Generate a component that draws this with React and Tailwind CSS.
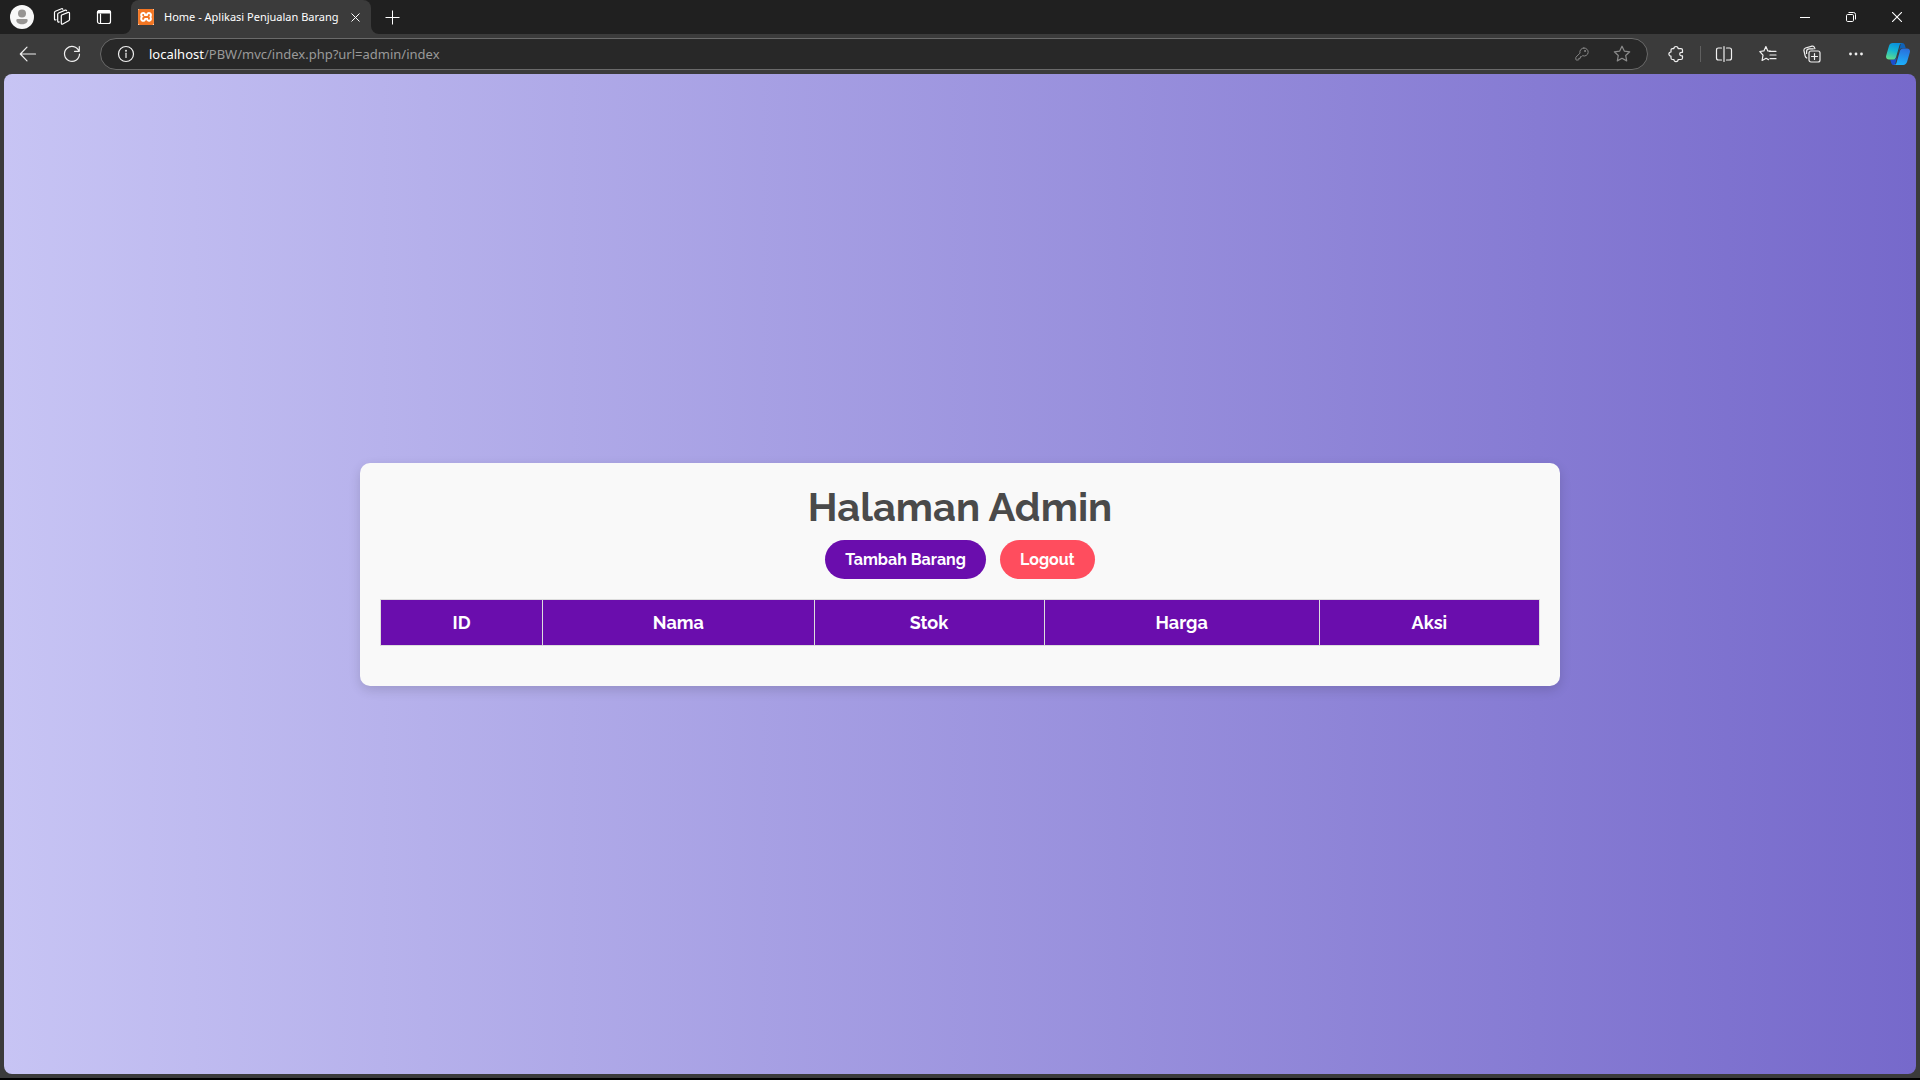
import { SiXampp } from "react-icons/si";

function Icon({ size = 20, children, className = "" }) {
  return (
    <svg
      width={size}
      height={size}
      viewBox="0 0 20 20"
      fill="none"
      stroke="currentColor"
      strokeWidth="1.2"
      strokeLinecap="round"
      strokeLinejoin="round"
      className={className}
      aria-hidden="true"
    >
      {children}
    </svg>
  );
}

function ToolButton({ label, children, className = "w-11" }) {
  return (
    <button type="button" aria-label={label} className={`flex h-8 shrink-0 items-center justify-center ${className}`}>
      {children}
    </button>
  );
}

function Flare({ flip = false }) {
  return (
    <svg width="8" height="8" viewBox="0 0 8 8" className={flip ? "-scale-x-100" : ""} aria-hidden="true">
      <path d="M8 0v8H0a8 8 0 0 0 8-8z" fill="#3b3b3b" />
    </svg>
  );
}

function CopilotLogo() {
  return (
    <svg width="24" height="24" viewBox="0 0 24 24" aria-hidden="true">
      <defs>
        <linearGradient id="copilotLeft" x1="0.6" y1="0" x2="0.3" y2="1">
          <stop offset="0" stopColor="#0a8fdc" />
          <stop offset="0.45" stopColor="#14b4d4" />
          <stop offset="1" stopColor="#5fdc8c" />
        </linearGradient>
        <linearGradient id="copilotRight" x1="0.6" y1="0" x2="0.4" y2="1">
          <stop offset="0" stopColor="#2a6fdc" />
          <stop offset="1" stopColor="#1cb2fb" />
        </linearGradient>
      </defs>
      <path d="M15 1h1.200c1.300 0 2.200.9 2.600 2.100l1 3.100h-3.600c-1.400 0-2.500.8-2.900 2.200l-1 3.200z" fill="#0f62b8" />
      <path d="M9 23H7.800c-1.300 0-2.200-.9-2.600-2.100l-1-3.400h3.600c1.400 0 2.500-.8 2.900-2.200l1-3.200z" fill="#1a4fd0" />
      <path d="M6.800 1h9.400c-1.400 0-2.300 1-2.700 2.300l-3.400 11.600c-.5 1.600-1.500 2.600-3.100 2.600H3c-2.300 0-3.500-1.700-2.800-4L2.900 4.200C3.500 2.200 4.800 1 6.800 1z" fill="url(#copilotLeft)" />
      <path d="M17.200 23H7.800c1.400 0 2.300-1 2.700-2.300l3.400-11.600c.5-1.700 1.500-2.700 3.100-2.700h4c2.300 0 3.500 1.800 2.800 4.100l-2.700 9.300c-.6 2-1.900 3.200-3.900 3.200z" fill="url(#copilotRight)" />
    </svg>
  );
}

function TabStrip() {
  return (
    <header className="flex h-[34px] items-center bg-[#202020] text-white">
      <button type="button" aria-label="Profile" className="ml-[10px] h-6 w-6 overflow-hidden rounded-full bg-[#f8f8f8]">
        <svg width="24" height="24" viewBox="0 0 24 24" fill="#979593" aria-hidden="true">
          <circle cx="12" cy="8.500" r="4" />
          <path d="M7.500 14h9a1.200 1.200 0 0 1 1.200 1.200c0 2.400-2.400 4-5.700 4s-5.700-1.600-5.700-4A1.200 1.200 0 0 1 7.500 14z" />
        </svg>
      </button>
      <button type="button" aria-label="Workspaces" className="ml-[18px] flex h-8 w-5 items-center justify-center">
        <Icon>
          <path d="M9.700 8l6.500-2.600q1.300-.4 1.300.9v6.200q0 .9-.9 1.300l-5.800 3.200q-1.500.7-1.500-.9V8.900q0-.7.4-.9z" />
          <path d="M7.200 14.900q-1.500.6-1.500-.9V7.300q0-.9.9-1.300l6.700-2.900q.9-.3 1.300.6" />
          <path d="M4 12.800q-1.500.6-1.500-.9V5.600q0-.9.9-1.300l6.100-2.500q.9-.3 1.300.5" />
        </Icon>
      </button>
      <button type="button" aria-label="Tab actions" className="ml-[22px] flex h-8 w-5 items-center justify-center">
        <Icon>
          <rect x="3.500" y="3.500" width="13" height="13" rx="2" />
          <path d="M3.500 5.500a2 2 0 0 1 2-2h9a2 2 0 0 1 2 2V6h-13z" fill="currentColor" />
          <path d="M6.500 7v9" />
        </Icon>
      </button>

      <div className="ml-[9px] flex items-end self-stretch">
        <Flare />
        <div className="flex h-full w-60 items-center rounded-t-lg bg-[#3b3b3b] pl-[7px] pr-2">
          <span className="flex h-4 w-4 items-center justify-center bg-white">
            <SiXampp size={16} color="#f37623" aria-hidden="true" />
          </span>
          <span className="ml-[10px] flex-1 whitespace-nowrap font-['Noto_Sans',sans-serif] text-[11px] leading-4">
            Home - Aplikasi Penjualan Barang
          </span>
          <button type="button" aria-label="Close tab" className="flex h-4 w-4 items-center justify-center">
            <svg width="9" height="9" viewBox="0 0 9 9" stroke="currentColor" aria-hidden="true">
              <path d="M.5.5l8 8M8.500.5l-8 8" />
            </svg>
          </button>
        </div>
        <Flare flip />
      </div>

      <button type="button" aria-label="New tab" className="ml-[3px] flex h-8 w-5 items-center justify-center">
        <svg width="15" height="15" viewBox="0 0 15 15" stroke="currentColor" aria-hidden="true">
          <path d="M7.500.5v14M.5 7.500h14" />
        </svg>
      </button>

      <div className="ml-auto flex">
        <ToolButton label="Minimize" className="w-[46px]">
          <svg width="10" height="10" viewBox="0 0 10 10" stroke="currentColor" aria-hidden="true">
            <path d="M0 5.500h10" />
          </svg>
        </ToolButton>
        <ToolButton label="Restore" className="w-[46px]">
          <svg width="10" height="10" viewBox="0 0 10 10" fill="none" stroke="currentColor" aria-hidden="true">
            <rect x=".5" y="2.500" width="7" height="7" rx="1.200" />
            <path d="M2.500.5h5a2 2 0 0 1 2 2v5" />
          </svg>
        </ToolButton>
        <ToolButton label="Close" className="w-[46px]">
          <svg width="10" height="10" viewBox="0 0 10 10" stroke="currentColor" strokeWidth="1.100" aria-hidden="true">
            <path d="M0 0l10 10M10 0L0 10" />
          </svg>
        </ToolButton>
      </div>
    </header>
  );
}

function Toolbar() {
  return (
    <nav className="flex h-10 items-center bg-[#3b3b3b] pl-[6px] pr-0.5 text-[#f0f0f0]">
      <ToolButton label="Back">
        <Icon>
          <path d="M17.500 10H2.500M9 3.200L2.300 10 9 16.800" />
        </Icon>
      </ToolButton>
      <ToolButton label="Refresh">
        <Icon>
          <path d="M17 7.200A7.500 7.500 0 1 0 17.500 10M17.300 2.500v4.800h-4.800" />
        </Icon>
      </ToolButton>

      <div className="mx-[6px] flex h-8 flex-1 items-center rounded-full border border-[#6a6a6a] bg-[#282828] px-[15px]">
        <Icon className="shrink-0">
          <circle cx="10" cy="10" r="7.500" />
          <path d="M10 9.200v4.300" />
          <circle cx="10" cy="6.800" r=".4" fill="currentColor" />
        </Icon>
        <a
          href="#"
          className="ml-[13px] flex-1 whitespace-nowrap font-['Noto_Sans',sans-serif] text-[13px] leading-5 text-[#9a9a9a]"
        >
          <span className="text-white">localhost</span>/PBW/mvc/index.php?url=admin/index
        </a>
        <button type="button" aria-label="Saved passwords" className="flex w-5 justify-center text-[#8b8b8b]">
          <Icon size={16}>
            <path d="M12.300 2.500a5 5 0 0 0-4.800 6.400L2.600 13.800q-.3.300-.3.700v2.300q0 .7.700.7h2.400q.6 0 .6-.6v-1.500h1.500q.6 0 .6-.6v-1.500h1.300l1.400-1.200A5 5 0 1 0 12.300 2.500z" />
            <circle cx="13.700" cy="6.200" r=".6" fill="currentColor" />
          </Icon>
        </button>
        <button type="button" aria-label="Add to favorites" className="ml-5 flex w-5 justify-center text-[#8b8b8b]">
          <Icon>
            <path d="M10 2.200l2.300 4.900 5.400.7-4 3.700 1 5.400L10 14.300l-4.700 2.600 1-5.400-4-3.700 5.400-.7z" />
          </Icon>
        </button>
      </div>

      <ToolButton label="Extensions">
        <Icon>
          <path d="M7.900 4.600a2.100 2.100 0 0 1 4.200 0H15q1.500 0 1.500 1.500V8.300h-1a1.800 1.800 0 0 0 0 3.600h1V14q0 1.500-1.500 1.500h-2.900a2.100 2.100 0 0 1-4.200 0H6.500Q5 15.500 5 14v-1.800a2.100 2.100 0 0 1 0-4.200V6.100q0-1.500 1.500-1.500z" />
        </Icon>
      </ToolButton>
      <div className="flex w-1 justify-center">
        <div className="h-4 w-px bg-[#606060]" />
      </div>
      <ToolButton label="Split screen">
        <Icon>
          <path d="M7.500 4H4.500Q2.500 4 2.500 6v8q0 2 2 2h3M12.500 4h3q2 0 2 2v8q0 2-2 2h-3M10 2.500v15" />
        </Icon>
      </ToolButton>
      <ToolButton label="Favorites">
        <Icon>
          <path d="M12.300 7.200L9.800 6.900 7.900 2.500 5.900 6.900 1.800 7.500l3.200 3.600-.9 5.400 4-2.200 2.400 1.300" />
          <path d="M11.500 7.300h6.500M12 11h6M12 14.700h6" />
        </Icon>
      </ToolButton>
      <ToolButton label="Collections">
        <Icon>
          <rect x="7" y="7" width="11" height="11" rx="2" />
          <path d="M12.500 9.500v6M9.500 12.500h6" />
          <path d="M4.800 14Q3.600 13.400 3.200 12L1.900 6.500Q1.700 4.600 3.500 4L10 2.200q1.900-.4 2.500 1.400l.4 1.200M4.600 9.500V7.500Q4.600 4.800 7.300 4.800h4" />
        </Icon>
      </ToolButton>
      <ToolButton label="Settings and more">
        <Icon>
          <g fill="currentColor" stroke="none">
            <circle cx="4.500" cy="10" r="1.400" />
            <circle cx="10" cy="10" r="1.400" />
            <circle cx="15.500" cy="10" r="1.400" />
          </g>
        </Icon>
      </ToolButton>
      <ToolButton label="Copilot" className="w-10">
        <CopilotLogo />
      </ToolButton>
    </nav>
  );
}

function AdminCard() {
  const columns = ["ID", "Nama", "Stok", "Harga", "Aksi"];
  return (
    <section className="w-full max-w-[1200px] rounded-[10px] bg-[#f9f9f9] p-5 text-center font-['Raleway','Inter',sans-serif] shadow-[0_4px_12px_rgba(0,0,0,0.14)]">
      <h1 className="text-[40px] font-bold leading-[47px] text-[#4a4a4a]">Halaman Admin</h1>
      <div className="mt-[10px] flex justify-center gap-[14px] text-base font-bold leading-[19px] text-white">
        <a href="#" className="rounded-[20px] bg-[#6a0dad] px-5 py-[10px]">
          Tambah Barang
        </a>
        <a href="#" className="rounded-[20px] bg-[#ff4d5e] px-5 py-[10px]">
          Logout
        </a>
      </div>
      <table className="my-5 w-full border-collapse text-lg leading-[21px] text-white">
        <thead>
          <tr>
            {columns.map((name) => (
              <th key={name} scope="col" className="border border-[#dddddd] bg-[#6a0dad] px-[15px] py-3 font-bold">
                {name}
              </th>
            ))}
          </tr>
        </thead>
      </table>
    </section>
  );
}

export default function App() {
  return (
    <div className="flex min-h-screen flex-col border-b-2 border-black bg-[#3b3b3b]">
      <TabStrip />
      <Toolbar />
      <main className="mx-1 mb-1 flex flex-1 items-center justify-center rounded-lg bg-[linear-gradient(to_right,#c7c4f4,#7669cb)]">
        <AdminCard />
      </main>
    </div>
  );
}
